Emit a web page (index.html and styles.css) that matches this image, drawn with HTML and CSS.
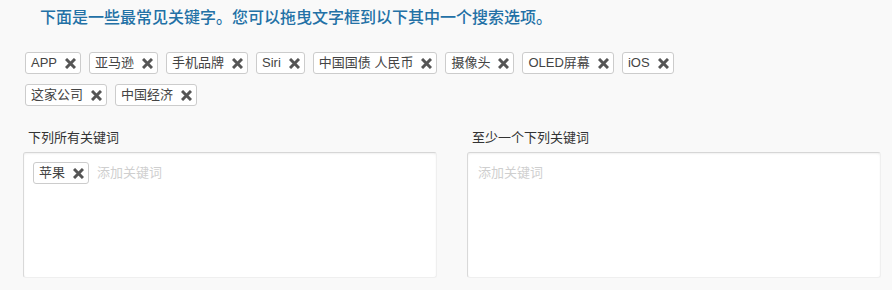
FILE: index.html
```html
<!DOCTYPE html>
<html>

<head>
    <meta name="viewport" content="width=device-width, initial-scale=1">
    <link rel="stylesheet" href="styles.css">
</head>

<body>

<div class="page">
    <h2 class="intro">下面是一些最常见关键字。您可以拖曳文字框到以下其中一个搜索选项。</h2>

    <div class="pool">
        <span class="tag">APP<svg class="x" viewBox="0 0 11 11"><path d="M1 1L10 10M10 1L1 10"/></svg></span>
        <span class="tag">亚马逊<svg class="x" viewBox="0 0 11 11"><path d="M1 1L10 10M10 1L1 10"/></svg></span>
        <span class="tag">手机品牌<svg class="x" viewBox="0 0 11 11"><path d="M1 1L10 10M10 1L1 10"/></svg></span>
        <span class="tag">Siri<svg class="x" viewBox="0 0 11 11"><path d="M1 1L10 10M10 1L1 10"/></svg></span>
        <span class="tag">中国国债 人民币<svg class="x" viewBox="0 0 11 11"><path d="M1 1L10 10M10 1L1 10"/></svg></span>
        <span class="tag">摄像头<svg class="x" viewBox="0 0 11 11"><path d="M1 1L10 10M10 1L1 10"/></svg></span>
        <span class="tag">OLED屏幕<svg class="x" viewBox="0 0 11 11"><path d="M1 1L10 10M10 1L1 10"/></svg></span>
        <span class="tag">iOS<svg class="x" viewBox="0 0 11 11"><path d="M1 1L10 10M10 1L1 10"/></svg></span>
        <span class="tag">这家公司<svg class="x" viewBox="0 0 11 11"><path d="M1 1L10 10M10 1L1 10"/></svg></span>
        <span class="tag">中国经济<svg class="x" viewBox="0 0 11 11"><path d="M1 1L10 10M10 1L1 10"/></svg></span>
    </div>

    <div class="fields">
        <div class="field">
            <label class="label">下列所有关键词</label>
            <div class="box">
                <span class="tag">苹果<svg class="x" viewBox="0 0 11 11"><path d="M1 1L10 10M10 1L1 10"/></svg></span>
                <span class="placeholder">添加关键词</span>
            </div>
        </div>
        <div class="field">
            <label class="label">至少一个下列关键词</label>
            <div class="box">
                <span class="placeholder">添加关键词</span>
            </div>
        </div>
    </div>
</div>

</body>
</html>
```

FILE: styles.css
```css
body {
    margin: 0;
    background-color: #f9f9f9;
    font-family: "Liberation Sans", "Noto Sans CJK SC", sans-serif;
    font-size: 13px;
    color: #333;
}

.page {
    padding: 8px 11px 0 23px;
}

.intro {
    margin: 0 0 0 17px;
    font-size: 16px;
    line-height: 20px;
    font-weight: 500;
    color: #2371a6;
}

.pool {
    display: flex;
    flex-wrap: wrap;
    gap: 10px 8px;
    margin: 24px 180px 0 2px;
}

.tag {
    display: inline-flex;
    align-items: center;
    height: 22px;
    box-sizing: border-box;
    padding: 0 4px 0 5px;
    background-color: #fff;
    border: 1px solid #ccc;
    border-radius: 3px;
    white-space: pre;
    line-height: 20px;
    color: #444;
}

.x {
    width: 11px;
    height: 11px;
    margin-left: 8px;
}

.x path {
    stroke: #555;
    stroke-width: 3;
    fill: none;
}

.fields {
    display: grid;
    grid-template-columns: 414px 414px;
    gap: 30px;
    margin-top: 23px;
}

.label {
    display: block;
    padding-left: 5px;
    line-height: 18px;
    margin-bottom: 5px;
}

.box {
    display: flex;
    align-items: center;
    align-content: flex-start;
    flex-wrap: wrap;
    gap: 8px;
    height: 126px;
    box-sizing: border-box;
    padding: 9px 9px;
    background-color: #fff;
    border: 1px solid #efefef;
    border-top-color: #d6d6d6;
    border-left-color: #d9d9d9;
    border-radius: 3px;
    box-shadow: inset 0 1px 2px rgba(0, 0, 0, 0.06);
}

.box .placeholder {
    height: 22px;
    line-height: 22px;
    color: #cfcfcf;
}

.field:last-child .placeholder {
    padding-left: 1px;
}
```
